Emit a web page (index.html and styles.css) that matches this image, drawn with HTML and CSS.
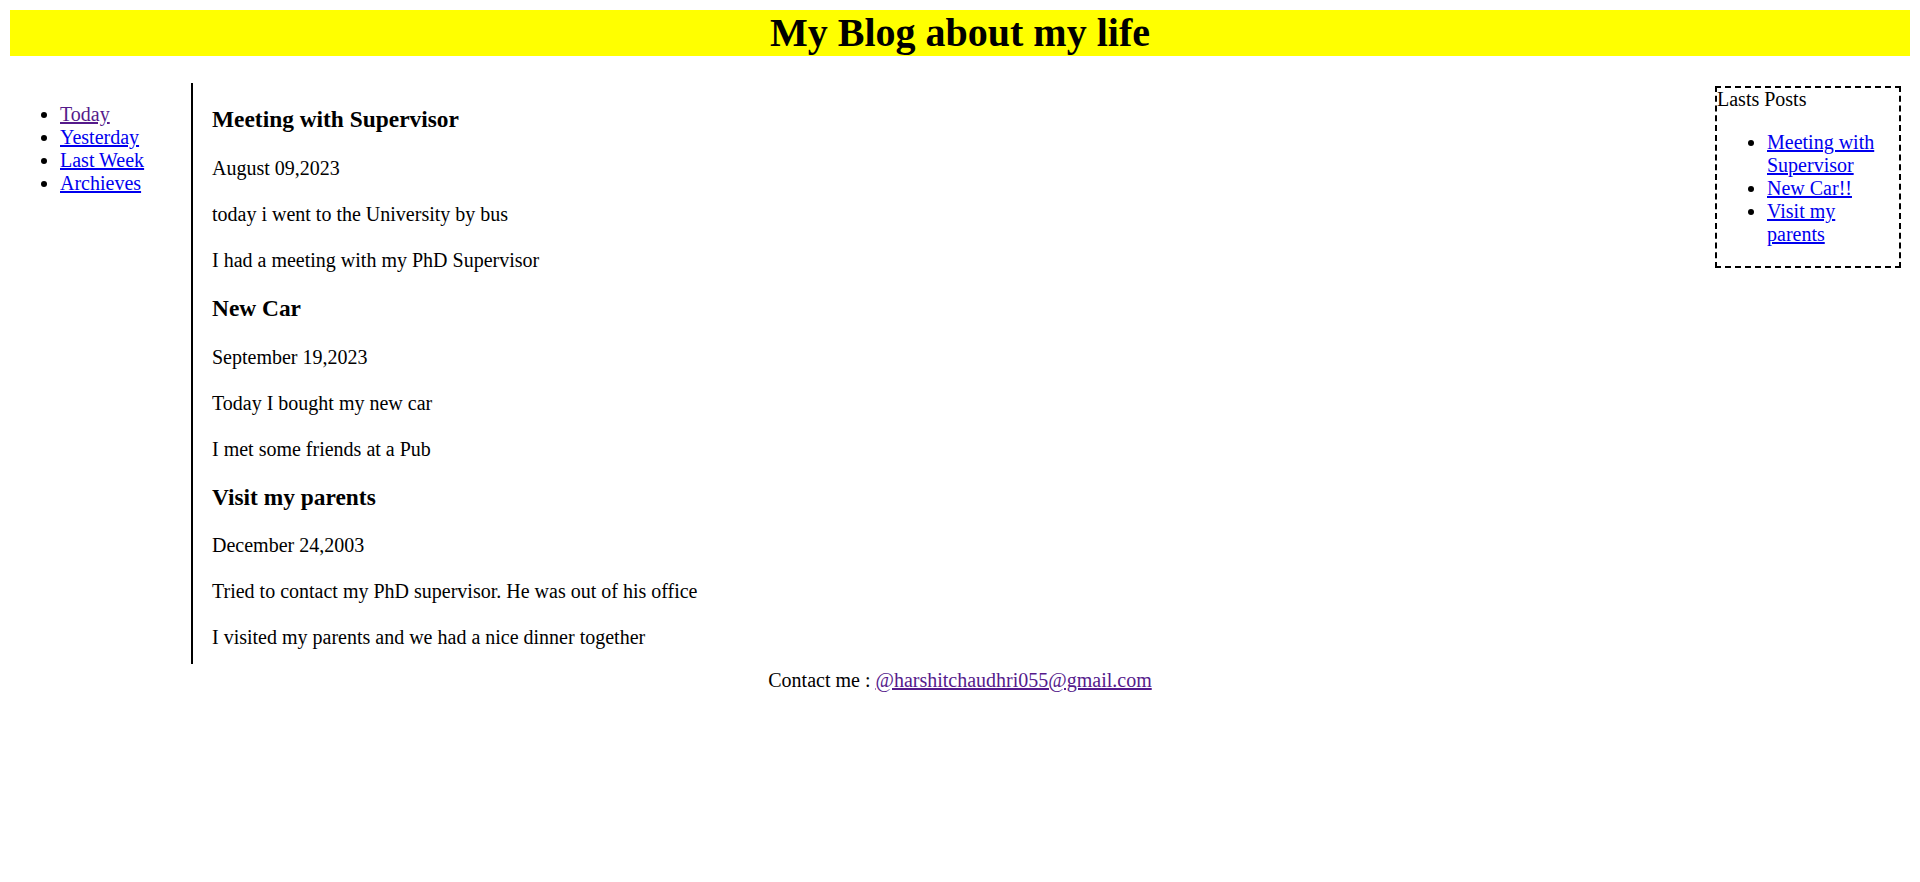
FILE: index.html
```html
<!DOCTYPE html>
<html lang="en">
<head>
<meta charset="utf-8">
<title>My Blog about my life</title>
<link rel="stylesheet" href="styles.css">
</head>
<body>
<header class="site-header">
  <h1 class="site-title">My Blog about my life</h1>
</header>
<div class="layout">
  <nav class="side-nav">
    <ul class="nav-list">
      <li><a href="#" class="link visited">Today</a></li>
      <li><a href="#" class="link">Yesterday</a></li>
      <li><a href="#" class="link">Last Week</a></li>
      <li><a href="#" class="link">Archieves</a></li>
    </ul>
  </nav>
  <main class="posts">
    <article class="post">
      <h3 class="post-title">Meeting with Supervisor</h3>
      <p class="post-text">August 09,2023</p>
      <p class="post-text">today i went to the University by bus</p>
      <p class="post-text">I had a meeting with my PhD Supervisor</p>
    </article>
    <article class="post">
      <h3 class="post-title">New Car</h3>
      <p class="post-text">September 19,2023</p>
      <p class="post-text">Today I bought my new car</p>
      <p class="post-text">I met some friends at a Pub</p>
    </article>
    <article class="post">
      <h3 class="post-title">Visit my parents</h3>
      <p class="post-text">December 24,2003</p>
      <p class="post-text">Tried to contact my PhD supervisor. He was out of his office</p>
      <p class="post-text last">I visited my parents and we had a nice dinner together</p>
    </article>
  </main>
  <aside class="latest">
    <div class="latest-title">Lasts Posts</div>
    <ul class="latest-list">
      <li><a href="#" class="link">Meeting with Supervisor</a></li>
      <li><a href="#" class="link">New Car!!</a></li>
      <li><a href="#" class="link">Visit my parents</a></li>
    </ul>
  </aside>
</div>
<footer class="site-footer">Contact me : <a href="#" class="link visited">@harshitchaudhri055@gmail.com</a></footer>
</body>
</html>
```

FILE: styles.css
```css
html, body {
  background: #ffffff;
}
body {
  margin: 10px;
  font-family: "Liberation Serif", "Times New Roman", serif;
  font-size: 20px;
  line-height: 23px;
  color: #000000;
}
.site-header {
  background: #ffff00;
  margin: 0 0 27px 0;
}
.site-title {
  margin: 0;
  font-size: 40px;
  line-height: 46px;
  font-weight: bold;
  text-align: center;
}
.layout {
  display: flex;
  align-items: flex-start;
}
.side-nav {
  width: 181px;
  flex: none;
}
.nav-list {
  margin: 20px 0;
  padding-left: 50px;
}
.link {
  color: #0000ee;
  text-decoration: underline;
}
.link.visited {
  color: #551a8b;
}
.posts {
  flex: 1;
  border-left: 2px solid #000000;
  padding-left: 19px;
  display: flow-root;
  align-self: stretch;
}
.post-title {
  margin: 23.4px 0;
  font-size: 23.4px;
  line-height: 27px;
  font-weight: bold;
}
.post-text {
  margin: 23px 0;
}
.post-text.last {
  margin-bottom: 15px;
}
.latest {
  width: 180px;
  padding-right: 2px;
  flex: none;
  margin: 3px 9px 0 0;
  border: 2px dashed #000000;
}
.latest-title {
  margin: 0;
}
.latest-list {
  margin: 20px 0;
  padding-left: 50px;
}
.site-footer {
  margin-top: 5px;
  text-align: center;
}
```
